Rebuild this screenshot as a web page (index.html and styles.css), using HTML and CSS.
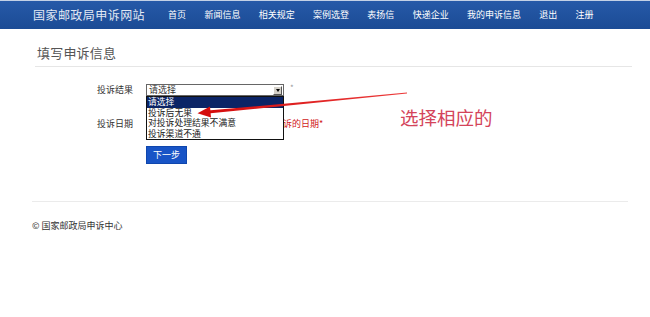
FILE: index.html
```html
<!DOCTYPE html>
<html lang="zh-CN">
<head>
<meta charset="utf-8">
<title>国家邮政局申诉网站</title>
<link rel="stylesheet" href="styles.css">
</head>
<body>
<header class="navbar">
  <div class="brand">国家邮政局申诉网站</div>
  <nav class="nav">
    <a>首页</a><a>新闻信息</a><a>相关规定</a><a>案例选登</a><a>表扬信</a><a>快递企业</a><a>我的申诉信息</a><a>退出</a><a>注册</a>
  </nav>
</header>

<main class="content">
  <h2 class="title">填写申诉信息</h2>
  <form class="form">
    <div class="row">
      <label class="label">投诉结果</label>
      <div class="select">
        <span class="select-text">请选择</span>
        <span class="select-btn"><span class="tri"></span></span>
        <ul class="options">
          <li class="active">请选择</li>
          <li>投诉后无果</li>
          <li>对投诉处理结果不满意</li>
          <li>投诉渠道不通</li>
        </ul>
      </div>
      <span class="star">*</span>
    </div>
    <div class="row row-date">
      <label class="label">投诉日期</label>
      <span class="date-input"></span>
      <span class="hint">请选择投诉的日期*</span>
    </div>
    <div class="row row-btn">
      <button type="button" class="btn">下一步</button>
    </div>
  </form>
</main>

<footer class="footer">
  <p class="copy">© 国家邮政局申诉中心</p>
</footer>

<div class="annotation">
  <svg class="arrow" width="650" height="317" viewBox="0 0 650 317">
    <defs>
      <linearGradient id="ag" x1="0" y1="0" x2="1" y2="0">
        <stop offset="0" stop-color="#d40c0c"/>
        <stop offset="1" stop-color="#ec3a3a"/>
      </linearGradient>
    </defs>
    <polygon points="208,110.6 407,92.5 407,93.6 208,113.6" fill="url(#ag)"/>
    <polygon points="197.5,113.3 210,106.5 211,117.5" fill="#d40c0c"/>
  </svg>
  <div class="note">选择相应的</div>
</div>
</body>
</html>
```

FILE: styles.css
```css
* { box-sizing: border-box; }

body {
  margin: 0;
  font-family: "Noto Sans CJK SC", "Noto Sans", sans-serif;
  color: #333;
  background: #fff;
  position: relative;
  width: 650px;
  height: 317px;
  overflow: hidden;
}

.navbar {
  height: 29px;
  border-top: 1px solid #c3d1e6;
  background: linear-gradient(#2659a8, #1b4b95);
  display: flex;
  align-items: center;
  padding-left: 33px;
}

.brand {
  font-size: 12px;
  letter-spacing: 0.45px;
  line-height: 14px;
  color: #e3e9f3;
  margin-right: 23px;
  white-space: nowrap;
}

.nav {
  display: flex;
  gap: 18.3px;
}

.nav a {
  font-size: 9px;
  line-height: 12px;
  color: #fff;
  white-space: nowrap;
}

.content {
  margin: 0 18px 0 35px;
}

.title {
  margin: 16px 0 0;
  padding: 0 0 5px 2px;
  font-size: 13px;
  line-height: 16px;
  font-weight: normal;
  color: #555;
  letter-spacing: 0.2px;
  border-bottom: 1px solid #e6e6e6;
}

.form {
  margin: 17px 0 0;
  padding-left: 62px;
}

.row {
  display: flex;
  align-items: center;
  height: 12px;
  margin-bottom: 22px;
  font-size: 9px;
  line-height: 12px;
}

.row-date {
  margin-bottom: 16px;
}

.label {
  width: 49px;
  color: #333;
}

.select {
  position: relative;
  width: 138px;
  height: 12px;
  border: 1px solid #666;
  background: #fff;
  display: flex;
  align-items: center;
}

.select-text {
  padding-left: 2px;
  flex: 1;
  line-height: 10px;
}

.select-btn {
  width: 9px;
  height: 9px;
  margin-right: 1px;
  background: #d4d0c8;
  border: 1px solid;
  border-color: #fff #555 #555 #fff;
  display: flex;
  align-items: center;
  justify-content: center;
}

.tri {
  width: 0;
  height: 0;
  border-left: 2.5px solid transparent;
  border-right: 2.5px solid transparent;
  border-top: 3px solid #000;
}

.options {
  position: absolute;
  left: -1px;
  top: 11px;
  width: 138px;
  margin: 0;
  padding: 0;
  list-style: none;
  background: #fff;
  border: 1px solid #111;
  z-index: 2;
}

.options li {
  height: 10.6px;
  line-height: 10.6px;
  font-size: 8.8px;
  padding-left: 1px;
  color: #222;
  white-space: nowrap;
}

.options li.active {
  background: #0b2466;
  color: #fff;
}

.star {
  margin-left: 6px;
  color: #999;
  font-size: 8px;
  position: relative;
  top: -2px;
}

.date-input {
  width: 97px;
  height: 12px;
  border: 1px solid #aaa;
  margin-right: 4px;
}

.hint {
  color: #d01818;
}

.row-btn {
  height: 18px;
  margin-bottom: 0;
  padding-left: 49px;
}

.btn {
  width: 41px;
  height: 18px;
  padding: 0;
  border: 1px solid #0f46ad;
  background: #1854c6;
  color: #fff;
  font-family: inherit;
  font-size: 9px;
  line-height: 16px;
}

.footer {
  margin: 37px 22px 0 32px;
  border-top: 1px solid #ebebeb;
}

.copy {
  margin: 18px 0 0;
  font-size: 9px;
  line-height: 12px;
  color: #333;
}

.annotation {
  position: absolute;
  left: 0;
  top: 0;
  width: 650px;
  height: 317px;
  pointer-events: none;
  z-index: 5;
}

.arrow {
  display: block;
}

.note {
  position: absolute;
  left: 400px;
  top: 105px;
  font-size: 18.5px;
  line-height: 24px;
  color: #d4445a;
  white-space: nowrap;
}
```
